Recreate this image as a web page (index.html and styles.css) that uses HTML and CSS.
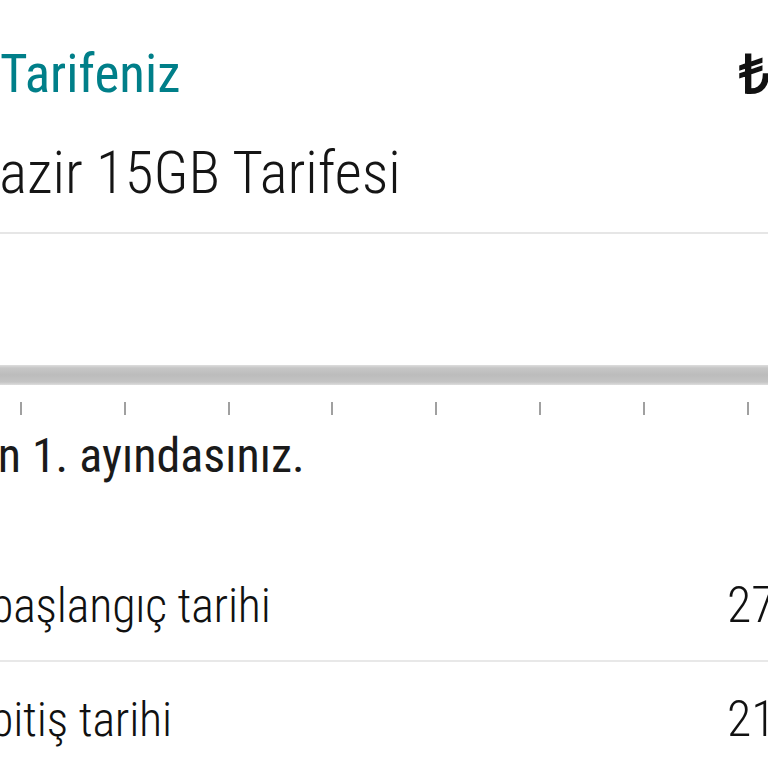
FILE: index.html
```html
<!DOCTYPE html>
<html lang="tr"><head><meta charset="utf-8"><link rel="stylesheet" href="styles.css"></head>
<body>
<main class="screen">
  <header class="head">
    <h1 class="title"><span class="pre">Mevcut </span>Tarifeniz</h1>
    <div class="price">₺</div>
  </header>
  <p class="plan">Hazir 15GB Tarifesi</p>
  <hr class="divider">
  <section class="progress">
    <div class="bar"></div>
    <div class="ticks">
      <span></span><span></span><span></span><span></span><span></span><span></span><span></span><span></span>
    </div>
  </section>
  <p class="status">Taahhüdünüzün 1. ayındasınız.</p>
  <div class="row first">
    <span class="label start">Taahhüt başlangıç tarihi</span>
    <span class="value">27.02.2023</span>
  </div>
  <hr class="divider thin">
  <div class="row">
    <span class="label end">Taahhüt bitiş tarihi</span>
    <span class="value">21.02.2025</span>
  </div>
</main>
</body></html>
```
FILE: styles.css
```css
html,body{margin:0;padding:0;background:#fff;overflow:hidden;}
body{width:768px;height:768px;}
.screen{font-family:"Roboto Condensed","Liberation Sans Narrow",sans-serif;color:#111;width:768px;}
.head{display:flex;justify-content:space-between;align-items:flex-start;height:130px;padding-top:42px;box-sizing:border-box;}
.title{margin:0;font-weight:400;font-size:53px;line-height:64px;color:#007f89;white-space:nowrap;}
.title .pre{display:inline-block;width:0;overflow:hidden;vertical-align:top;}
.price{font-family:"Liberation Sans",sans-serif;font-weight:700;font-size:54px;line-height:64px;margin-right:-2px;color:#111;}
.plan{margin:3px 0 0 -37px;font-weight:300;font-size:59px;line-height:80px;white-space:nowrap;color:#151515;}
.divider{border:0;height:2px;background:#e6e6e6;margin:19px 0 0;}
.progress{padding-top:131px;}
.bar{height:20px;background:linear-gradient(#dedede 0,#c6c6c6 3px,#bcbcbc 10px,#c4c4c4 17px,#dedede 20px);}
.ticks{display:flex;padding:17px 0 0 20px;height:13px;}
.ticks span{width:2px;height:13px;background:#a0a0a0;flex:none;margin-right:101.8px;}
.status{margin:9px 0 0 -278px;font-size:48px;line-height:64px;font-weight:400;white-space:nowrap;color:#1a1a1a;}
.row{display:grid;grid-template-columns:727px 1fr;align-items:baseline;white-space:nowrap;}
.label{font-weight:300;font-size:48px;line-height:64px;letter-spacing:-0.2px;}
.start{margin-left:-170px;padding-top:86px;}
.end{margin-left:-170px;}
.value{font-weight:300;font-size:50px;line-height:64px;}
.thin{height:2px;background:#e8e8e8;margin:22px 0 25px;}
```
